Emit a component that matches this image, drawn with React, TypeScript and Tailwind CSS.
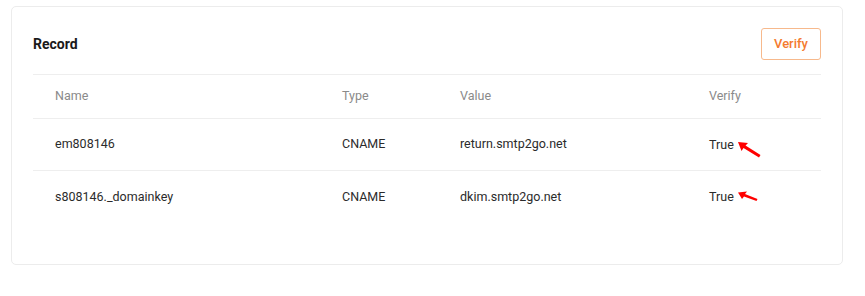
import React from "react";

function Arrow({ variant }: { variant: 1 | 2 }) {
  if (variant === 1) {
    return (
      <svg width="26" height="20" viewBox="0 0 26 20" className="absolute" style={{ left: 28, top: 5 }}>
        <polygon points="1,2 11,3 8.5,5.5 23.5,15 22,17.5 6.5,8 4.5,11" fill="#ff0000" />
      </svg>
    );
  }
  return (
    <svg width="24" height="14" viewBox="0 0 24 14" className="absolute" style={{ left: 28, top: 3 }}>
      <polygon points="1,2.5 10,1.5 8,4 20.5,9 19.5,11 7,6.5 5,9" fill="#ff0000" />
    </svg>
  );
}

const rows = [
  { name: "em808146", type: "CNAME", value: "return.smtp2go.net", verify: "True", arrow: 1 as const },
  { name: "s808146._domainkey", type: "CNAME", value: "dkim.smtp2go.net", verify: "True", arrow: 2 as const },
];

export default function App() {
  return (
    <div className="w-[865px] h-[296px] bg-white pt-[6px] pl-[11px]" style={{ fontFamily: "Roboto, 'Liberation Sans', sans-serif" }}>
      <div className="w-[832px] h-[259px] border border-[#ececec] rounded-[5px] px-[21px] pt-[21px]">
        <div className="flex items-center justify-between h-[32px]">
          <span className="text-[14px] font-bold text-[#1a1a1a]">Record</span>
          <button className="h-[32px] w-[60px] border border-[#f7b98c] rounded-[3px] text-[13px] font-medium text-[#f47b30] bg-white">
            Verify
          </button>
        </div>
        <div className="mt-[14px] border-t border-[#eeeeee]">
          <div className="grid grid-cols-[287px_118px_249px_134px] h-[44px] items-center border-b border-[#eeeeee] text-[12.5px] text-[#8a8a8a]">
            <div className="pl-[22px]">Name</div>
            <div className="pl-[22px]">Type</div>
            <div className="pl-[22px]">Value</div>
            <div className="pl-[22px]">Verify</div>
          </div>
          {rows.map((r, i) => (
            <div
              key={i}
              className={`grid grid-cols-[287px_118px_249px_134px] h-[52px] items-center text-[12.5px] text-[#2b2b2b] ${i === 0 ? "border-b border-[#eeeeee]" : ""}`}
            >
              <div className="pl-[22px]">{r.name}</div>
              <div className="pl-[22px]">{r.type}</div>
              <div className="pl-[22px]">{r.value}</div>
              <div className="pl-[22px]">
                <span className="relative inline-block leading-[19px]">
                  {r.verify}
                  <Arrow variant={r.arrow} />
                </span>
              </div>
            </div>
          ))}
        </div>
      </div>
    </div>
  );
}
